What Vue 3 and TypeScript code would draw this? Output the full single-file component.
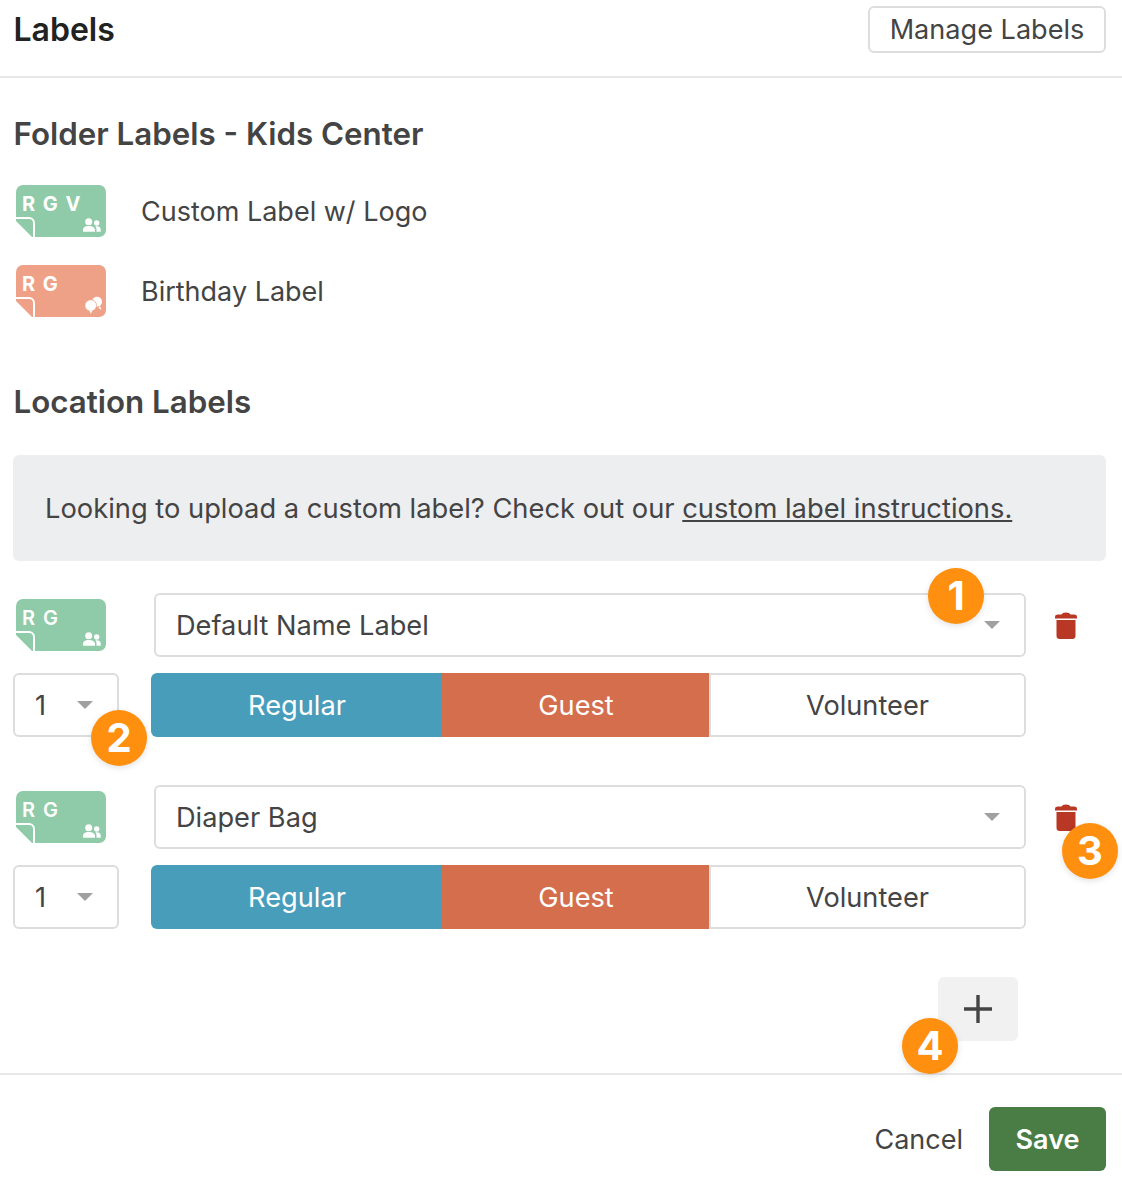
<script setup lang="ts">
interface LabelArt { letters: string; color: string; icon: 'people' | 'balloons' }
const folderLabels: { name: string; art: LabelArt }[] = [
  { name: 'Custom Label w/ Logo', art: { letters: 'R G V', color: '#8fcba8', icon: 'people' } },
  { name: 'Birthday Label', art: { letters: 'R G', color: '#efa187', icon: 'balloons' } },
]
const green: LabelArt = { letters: 'R G', color: '#8fcba8', icon: 'people' }
const rows = ['Default Name Label', 'Diaper Bag'].map((name) => ({ name, art: green }))
</script>

<template>
  <div class="page">
    <header class="top">
      <h1>Labels</h1>
      <button class="manage">Manage Labels</button>
    </header>

    <section class="folder">
      <h2>Folder Labels - Kids Center</h2>
      <div v-for="l in folderLabels" :key="l.name" class="folder-row">
        <svg class="art" width="90" height="52" viewBox="0 0 90 52">
          <path :fill="l.art.color" d="M7 0H83a7 7 0 0 1 7 7V45a7 7 0 0 1-7 7H19L0 33V7a7 7 0 0 1 7-7Z" />
          <path fill="#fff" d="M0 37L15 52H0Z" />
          <path :fill="l.art.color" d="M0 33H13a5 5 0 0 1 5 5V52H16L0 36Z" />
          <path fill="none" stroke="#fff" stroke-width="2" d="M0 33H13a5 5 0 0 1 5 5V52" />
          <text x="6" y="25.700" class="art-text">{{ l.art.letters }}</text>
          <g v-if="l.art.icon === 'people'" fill="#fff">
            <circle cx="72.700" cy="36.700" r="3.500" /><path d="M67 46.700v-1.700c0-2.600 2.500-4 5.700-4s6.300 1.400 6.300 4v1.700Z" />
            <circle cx="80.700" cy="38" r="2.700" /><path d="M80.500 46.700V44.500c0-1.300-.5-2.300-1.200-3 2.600-.8 5.400.4 5.400 3v2.200Z" />
          </g>
          <g v-else fill="#fff">
            <circle cx="81" cy="36.700" r="5" /><path d="M84 41l1.500 4-3-2Z" />
            <circle cx="74.700" cy="40.500" r="5.800" stroke="#efa187" stroke-width=".8" /><path d="M73.700 46h2.500L74.700 49Z" />
          </g>
        </svg>
        <span>{{ l.name }}</span>
      </div>
    </section>

    <section class="location">
      <h2>Location Labels</h2>
      <div class="info">
        <span>Looking to upload a custom label? Check out our <a>custom label instructions.</a></span>
      </div>

      <div v-for="r in rows" :key="r.name" class="entry">
        <div class="line-one">
          <svg class="art" width="90" height="52" viewBox="0 0 90 52">
            <path :fill="r.art.color" d="M7 0H83a7 7 0 0 1 7 7V45a7 7 0 0 1-7 7H19L0 33V7a7 7 0 0 1 7-7Z" />
            <path fill="#fff" d="M0 37L15 52H0Z" />
            <path :fill="r.art.color" d="M0 33H13a5 5 0 0 1 5 5V52H16L0 36Z" />
            <path fill="none" stroke="#fff" stroke-width="2" d="M0 33H13a5 5 0 0 1 5 5V52" />
            <text x="6" y="25.700" class="art-text thin">{{ r.art.letters }}</text>
            <g fill="#fff">
              <circle cx="72.700" cy="36.700" r="3.500" /><path d="M67 46.700v-1.700c0-2.600 2.500-4 5.700-4s6.300 1.400 6.300 4v1.700Z" />
              <circle cx="80.700" cy="38" r="2.700" /><path d="M80.500 46.700V44.500c0-1.300-.5-2.300-1.200-3 2.600-.8 5.400.4 5.400 3v2.200Z" />
            </g>
          </svg>
          <div class="select wide">
            <span>{{ r.name }}</span><i class="caret"></i>
          </div>
          <svg class="trash" width="22" height="27" viewBox="0 0 22 27">
            <path fill="#b93725" d="M0 6.500V5C0 3.300 1.500 2.600 3 2.600H6.500C7.300 1.200 8.500.5 11 .5s3.700.7 4.500 2.100H19c1.500 0 3 .7 3 2.400v1.500Z" />
            <path fill="#b93725" d="M1.500 8H20.500V24c0 1.700-1.300 3-3 3h-13c-1.700 0-3-1.300-3-3Z" />
          </svg>
        </div>
        <div class="line-two">
          <div class="select small"><span>1</span><i class="caret"></i></div>
          <div class="toggles">
            <div class="t regular">Regular</div>
            <div class="t guest">Guest</div>
            <div class="t volunteer">Volunteer</div>
          </div>
        </div>
      </div>

      <div class="add-row">
        <button class="add" aria-label="Add">
          <svg width="28" height="28" viewBox="0 0 28 28"><path stroke="#444" stroke-width="3.400" d="M14 0V28M0 14H28" /></svg>
        </button>
      </div>
    </section>

    <footer class="bottom">
      <span class="cancel">Cancel</span>
      <button class="save">Save</button>
    </footer>

    <div class="badge b1">1</div>
    <div class="badge b2">2</div>
    <div class="badge b3">3</div>
    <div class="badge b4">4</div>
  </div>
</template>

<style scoped>
.page {
  position: relative;
  width: 1122px;
  height: 1186px;
  overflow: hidden;
  background: #fff;
  color: #444;
  font-family: Inter, "Liberation Sans", sans-serif;
  font-size: 27.2px;
}
.top {
  height: 78px;
  box-sizing: border-box;
  border-bottom: 2px solid #e8e8e8;
  padding: 6px 16px 0 13.5px;
  display: flex;
  justify-content: space-between;
  align-items: flex-start;
}
h1 {
  margin: 0;
  font-size: 32px;
  line-height: 48px;
  font-weight: 600;
  color: #222;
}
h2 {
  margin: 0;
  font-size: 31.3px;
  line-height: 36px;
  font-weight: 600;
  color: #444;
}
button { font-family: inherit; }
.manage {
  width: 238px;
  height: 47px;
  background: #fff;
  border: 2px solid #ddd;
  border-radius: 6px;
  color: #444;
  font-size: 27.1px;
  padding: 0;
}
.folder { padding: 38px 16px 0 13.5px; }
.folder-row {
  display: flex;
  align-items: center;
  height: 52px;
  margin-top: 28px;
  padding-left: 2.5px;
  gap: 35px;
  font-size: 27px;
}
.folder h2 + .folder-row { margin-top: 33px; }
.art { flex: none; display: block; }
.art-text {
  font-family: Inter, sans-serif;
  font-size: 20px;
  font-weight: 700;
  fill: #fff;
  letter-spacing: 1.5px;
}
.thin { font-weight: 600; }
.location { padding: 67px 16px 0 13px; }
.location h2 { padding-left: 0.5px; }
.info {
  margin-top: 35px;
  height: 106px;
  box-sizing: border-box;
  padding-left: 32px;
  display: flex;
  align-items: center;
  background: #edeef0;
  border-radius: 6px;
  font-size: 27.3px;
}
.info a { text-decoration: underline; }
.entry { margin-top: 32px; }
.entry + .entry { margin-top: 48px; }
.line-one { display: flex; align-items: center; height: 64px; padding-left: 3px; }
.line-one .art { margin-right: 48px; }
.select {
  box-sizing: border-box;
  height: 64px;
  background: #fff;
  border: 2px solid #ddd;
  border-radius: 6px;
  display: flex;
  align-items: center;
  justify-content: space-between;
}
.wide { width: 872px; padding: 0 24px 0 20px; }
.small { width: 106px; padding: 0 24px 0 20px; }
.caret {
  width: 0;
  height: 0;
  border-left: 8px solid transparent;
  border-right: 8px solid transparent;
  border-top: 8px solid #a0a0a0;
}
.trash { margin-left: 29px; flex: none; }
.line-two { display: flex; margin-top: 16px; gap: 32px; }
.toggles { display: flex; width: 875px; height: 64px; }
.t {
  display: flex;
  align-items: center;
  justify-content: center;
  box-sizing: border-box;
}
.regular { width: 290px; background: #489dbb; color: #fff; border-radius: 6px 0 0 6px; padding-left: 2px; }
.guest { width: 268px; background: #d46e4d; color: #fff; padding-left: 2px; }
.volunteer {
  width: 317px;
  border: 2px solid #ddd;
  border-radius: 0 6px 6px 0;
}
.add-row { display: flex; justify-content: flex-end; margin-top: 48px; padding-right: 88px; }
.add {
  width: 80px;
  height: 64px;
  background: #f1f1f2;
  border: 0;
  border-radius: 6px;
  padding: 0;
  display: flex;
  align-items: center;
  justify-content: center;
}
.bottom {
  margin-top: 32px;
  border-top: 2px solid #e8e8e8;
  padding: 32px 16px 0 0;
  display: flex;
  justify-content: flex-end;
  align-items: center;
  gap: 26px;
  font-size: 27px;
}
.save {
  width: 117px;
  height: 64px;
  background: #4a7d45;
  color: #fff;
  border: 0;
  border-radius: 6px;
  font-size: 27px;
  font-weight: 600;
  padding: 0;
}
.badge {
  position: absolute;
  width: 56px;
  height: 56px;
  box-sizing: border-box;
  padding-bottom: 2px;
  border-radius: 50%;
  background: #ff8f0e;
  color: #fff;
  font-size: 40px;
  font-weight: 700;
  font-family: Inter, sans-serif;
  display: flex;
  align-items: center;
  justify-content: center;
  box-shadow: 0 2px 6px rgba(0, 0, 0, .12);
}
.b1 { left: 928px; top: 568px; }
.b2 { left: 91px; top: 710px; }
.b3 { left: 1062px; top: 823px; }
.b4 { left: 902px; top: 1018px; }
</style>
